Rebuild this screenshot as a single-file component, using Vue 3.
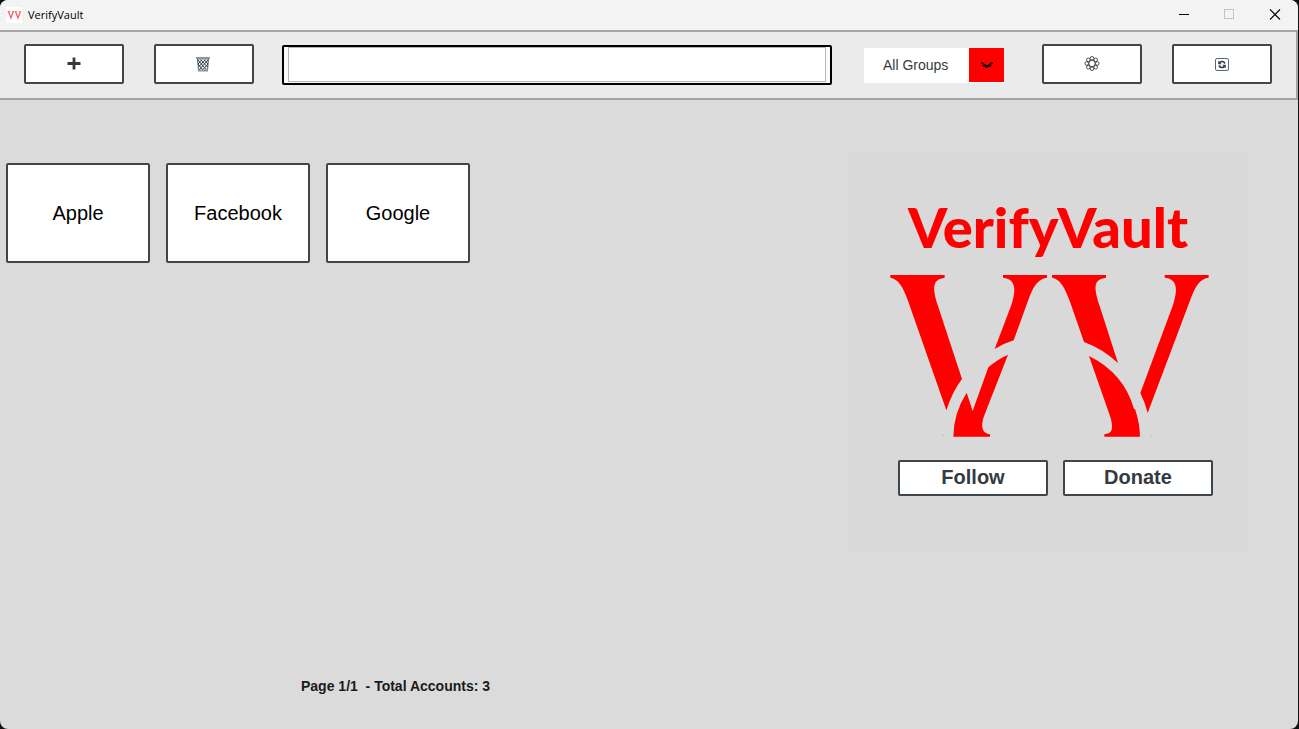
<script setup>
import { ref } from 'vue'

const accounts = ['Apple', 'Facebook', 'Google']
const query = ref('')
</script>

<template>
  <div class="window">
    <header class="titlebar">
      <svg class="app-icon" viewBox="0 0 16 16" aria-hidden="true">
        <rect width="16" height="16" fill="#fff" />
        <path d="M2.5 4.5 5 11 7.3 4.5M9.5 4.5 12 11 14.3 4.5" fill="none" stroke="#f55" stroke-width="1.2" />
        <path d="M1.5 4.5H4M6.3 4.5h1.8M8.8 4.5h2M13.2 4.5h1.6" stroke="#f66" />
      </svg>
      <h1 class="title">VerifyVault</h1>
      <div class="controls">
        <button type="button" aria-label="Minimize">
          <svg viewBox="0 0 12 12"><path d="M2 5.5h10" stroke="#000" /></svg>
        </button>
        <button type="button" aria-label="Maximize" disabled>
          <svg viewBox="0 0 12 12"><rect x="1.5" y="0.5" width="9" height="9" stroke="#c3c3c3" fill="none" /></svg>
        </button>
        <button type="button" aria-label="Close">
          <svg viewBox="0 0 12 12"><path d="M1 0.5l10 10M11 0.5l-10 10" stroke="#000" stroke-width="1.1" /></svg>
        </button>
      </div>
    </header>

    <nav class="toolbar">
      <button type="button" class="box tool" aria-label="Add account">
        <svg viewBox="0 0 16 16"><path d="M8 1.5v12M1.5 7.5h13" stroke="#343a40" stroke-width="2.8" /></svg>
      </button>
      <button type="button" class="box tool" aria-label="Trash">
        <svg viewBox="0 0 16 16">
          <path d="M1.5 3h11l-1 11.5h-9z" fill="#fff" stroke="#4c6585" />
          <path d="M2 4l8.5 10M5 4l6.500 7M8.5 4L12 8M12 4L3 14M9 4l-6.500 7M5.5 4L2 8M12 8l-5.500 6M2 8l5 6" stroke="#343a40" />
          <path d="M0 2h14M2 14.5h10" stroke="#92959a" stroke-width="2" />
        </svg>
      </button>
      <div class="search"><input v-model="query" type="text" aria-label="Search accounts" /></div>
      <div class="group">
        <select aria-label="Group"><option>All Groups</option></select>
        <span class="arrow">
          <svg viewBox="0 0 12 8"><path d="M0 2.5L2 2C4 5.5 8 5.5 10 2l2 .5M1.5 4C4 6.5 8 6.5 10.5 4" fill="none" stroke="#000" stroke-width="1.4" /></svg>
        </span>
      </div>
      <button type="button" class="box tool" aria-label="Settings">
        <svg viewBox="0 0 16 16" fill="none" stroke="#343a40" stroke-width=".9">
          <circle cx="8" cy="7.500" r="3.200" />
          <circle cx="8" cy="2.300" r="1.800" /><circle cx="8" cy="12.700" r="1.800" />
          <circle cx="2.800" cy="7.500" r="1.800" /><circle cx="13.200" cy="7.500" r="1.800" />
          <circle cx="4.300" cy="3.800" r="1.800" /><circle cx="11.700" cy="3.800" r="1.800" />
          <circle cx="4.300" cy="11.200" r="1.800" /><circle cx="11.700" cy="11.200" r="1.800" />
        </svg>
      </button>
      <button type="button" class="box tool" aria-label="Refresh">
        <svg viewBox="0 0 16 16">
          <rect x="1.5" y="2.5" width="13" height="12" rx="1.5" fill="#fff" stroke="#596584" />
          <path d="M5.500 6.500Q9 4 11 7.500M10.500 10.500Q7 13 5 9.500" fill="none" stroke="#343a40" stroke-width="1.600" />
          <path d="M4.200 4.800v3.500h3.500zM11.800 12.200V8.700H8.300z" fill="#343a40" />
        </svg>
      </button>
    </nav>

    <main class="content">
      <section class="accounts">
        <div class="grid">
          <button v-for="name in accounts" :key="name" type="button" class="box account">{{ name }}</button>
        </div>
        <p class="status">Page 1/1&nbsp; - Total Accounts: 3</p>
      </section>

      <aside class="promo">
        <h2 class="wordmark">VerifyVault</h2>
        <svg class="logo" viewBox="30 30 957 486" role="img" aria-label="VV" fill="#f00">
          <path d="M31 30H194V38C158 43 156 65 173 120L246 342Q217 380 199 436L85 110C68 62 55 43 31 38Z" />
          <path d="M369 30H501V38C477 41 463 58 449 94L401 226Q372 235 344 252L394 120C410 70 406 42 369 38Z" />
          <path d="M384 269L311 456C302 486 306 505 330 508V515H220Q221 443 260 383L278 438L325 307Q352 283 384 269Z" />
          <path d="M516 30H678V38C640 43 641 65 658 120L714 294Q667 251 612 231L570 110C552 62 540 43 516 38Z" />
          <path d="M854 30H986V38C962 41 949 58 935 94L803 444Q795 412 781 384L879 120C895 70 891 42 854 38Z" />
          <path d="M627 273Q732 325 762 432L765 432Q779 472 780 515H673V508C698 506 701 490 691 456Z" />
          <path d="M187 508h3v6h-3zM812 506l4 8h-4z" opacity=".25" />
        </svg>
        <div class="links">
          <button type="button" class="box link">Follow</button>
          <button type="button" class="box link">Donate</button>
        </div>
      </aside>
    </main>
  </div>
</template>

<style>
html, body { margin: 0; background: #111; }
</style>

<style scoped>
* { box-sizing: border-box; }
.window {
  display: flex;
  flex-direction: column;
  min-height: 100vh;
  margin-right: 1px;
  overflow: hidden;
  border-radius: 8px;
  background: #dbdbdb;
  font-family: "Liberation Sans", Arial, sans-serif;
}
.titlebar { display: flex; align-items: center; height: 30px; padding-left: 6px; background: #f3f3f3; }
.app-icon { width: 16px; height: 16px; }
.title { margin: 0 0 0 6px; font: 400 11px/16px "Open Sans", sans-serif; color: #000; }
.controls { display: flex; margin-left: auto; }
.controls button { display: grid; place-items: center; width: 46px; height: 30px; padding: 0; border: 0; background: none; }
.controls svg { width: 12px; height: 12px; }
.toolbar {
  display: flex;
  align-items: flex-start;
  height: 70px;
  padding: 12px 24px 0;
  border: 2px solid #a5a5a5;
  border-left: 0;
  background: #ebebeb;
}
.box { padding: 0; border: 2px solid #3e454b; border-radius: 2px; background: #fff; font-family: inherit; color: #343a40; }
.tool { display: grid; place-items: center; flex: none; width: 100px; height: 40px; }
.tool + .tool { margin-left: 30px; }
.tool svg { width: 16px; height: 16px; }
.search { flex: 1; height: 40px; margin: 1px 32px 0 28px; padding: 0 4px 1px; border: 2px solid #000; border-radius: 2px; background: #fafaff; }
.search input { display: block; width: 100%; height: 100%; padding: 0 6px; border: 1px solid #b4b4b4; outline: 0; background: #fff; font: 14px "Liberation Sans", Arial, sans-serif; }
.group { position: relative; flex: none; width: 140px; height: 35px; margin: 4px 38px 0 0; }
.group select { appearance: none; width: 100%; height: 100%; padding: 0 36px 2px 19px; border: 0; border-radius: 0; background: #fff; font: 14px "Liberation Sans", Arial, sans-serif; color: #343a40; }
.arrow { position: absolute; top: 0; right: 0; display: grid; place-items: center; width: 35px; height: 34px; background: #f00; pointer-events: none; }
.arrow svg { width: 12px; height: 8px; }
.content { display: flex; flex: 1; }
.accounts { display: flex; flex: 1; flex-direction: column; justify-content: space-between; padding: 63px 0 34px 6px; }
.grid { display: flex; flex-wrap: wrap; gap: 16px; }
.account { width: 144px; height: 100px; font-size: 20px; color: #000; }
.status { margin: 0; padding-left: 295px; font-size: 14px; font-weight: 700; line-height: 18px; color: #1a1a1a; }
.promo { display: flex; flex: none; flex-direction: column; align-items: center; width: 400px; height: 400px; margin: 52px 50px 0 0; padding-top: 42px; background: #d9d9d9; }
.wordmark { margin: 0; font: 900 56px/66px "Lato", sans-serif; color: #f00; }
.logo { width: 319px; height: 162px; margin: 15px 0 0 3px; }
.links { display: flex; gap: 15px; margin: 23px 0 0 15px; }
.link { width: 150px; height: 36px; padding-bottom: 2px; font-size: 20px; font-weight: 700; }
</style>
